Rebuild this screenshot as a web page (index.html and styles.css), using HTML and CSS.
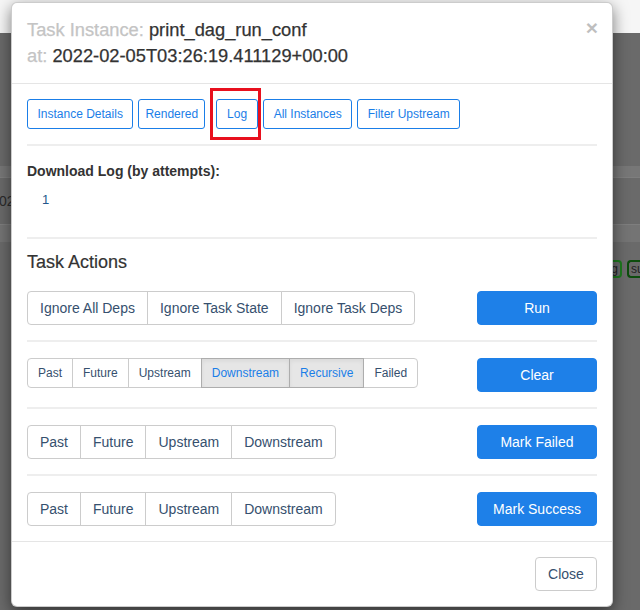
FILE: index.html
```html
<!DOCTYPE html>
<html lang="en">
<head>
<meta charset="utf-8">
<title>Task Instance</title>
<link rel="stylesheet" href="styles.css">
</head>
<body>
<div class="backdrop">
  <div class="bg-top"></div>
  <div class="bg-gap"></div>
  <div class="bg-band-a"></div>
  <div class="bg-row"><span class="bg-text">02</span></div>
  <div class="bg-band-b"></div>
  <div class="bg-badges"><span class="badge">running</span><span class="badge dark">su</span></div>
</div>

<div class="modal">
  <div class="modal-header">
    <button class="close" type="button">&times;</button>
    <div class="title"><span class="muted">Task Instance:</span> print_dag_run_conf</div>
    <div class="title"><span class="muted">at:</span> 2022-02-05T03:26:19.411129+00:00</div>
  </div>
  <div class="modal-body">
    <div class="tabs">
      <button class="btn-outline">Instance Details</button>
      <button class="btn-outline narrow">Rendered</button>
      <span class="highlight-wrap"><button class="btn-outline wide">Log</button><span class="highlight"></span></span>
      <button class="btn-outline">All Instances</button>
      <button class="btn-outline">Filter Upstream</button>
    </div>
    <hr class="divider">
    <div class="section-label">Download Log (by attempts):</div>
    <div class="attempts"><a class="attempt-link" href="#">1</a></div>
    <hr class="divider before-title">
    <h4 class="section-title">Task Actions</h4>
    <div class="action-row">
      <div class="btn-group">
        <button class="btn">Ignore All Deps</button>
        <button class="btn">Ignore Task State</button>
        <button class="btn">Ignore Task Deps</button>
      </div>
      <button class="btn-primary">Run</button>
    </div>
    <hr class="divider">
    <div class="action-row">
      <div class="btn-group small">
        <button class="btn">Past</button>
        <button class="btn">Future</button>
        <button class="btn">Upstream</button>
        <button class="btn active">Downstream</button>
        <button class="btn active">Recursive</button>
        <button class="btn">Failed</button>
      </div>
      <button class="btn-primary">Clear</button>
    </div>
    <hr class="divider">
    <div class="action-row">
      <div class="btn-group">
        <button class="btn">Past</button>
        <button class="btn">Future</button>
        <button class="btn">Upstream</button>
        <button class="btn">Downstream</button>
      </div>
      <button class="btn-primary">Mark Failed</button>
    </div>
    <hr class="divider">
    <div class="action-row">
      <div class="btn-group">
        <button class="btn">Past</button>
        <button class="btn">Future</button>
        <button class="btn">Upstream</button>
        <button class="btn">Downstream</button>
      </div>
      <button class="btn-primary">Mark Success</button>
    </div>
  </div>
  <div class="modal-footer">
    <button class="btn close-btn">Close</button>
  </div>
</div>
</body>
</html>
```

FILE: styles.css
```css
* { box-sizing: border-box; }

html, body {
  margin: 0;
  padding: 0;
}

body {
  width: 640px;
  height: 610px;
  overflow: hidden;
  font-family: "Liberation Sans", Arial, Helvetica, sans-serif;
  color: #333;
  background: #6a6a6a;
  position: relative;
}

/* ---------- background page under the backdrop ---------- */
.backdrop {
  display: flex;
  flex-direction: column;
  overflow: hidden;
}
.bg-top { height: 33px; background: #f6f6f6; }
.bg-gap { height: 133px; background: #6a6a6a; }
.bg-band-a { height: 11px; background: #777; }
.bg-row {
  height: 48px;
  background: #6a6a6a;
  border-top: 1px solid #7e7e7e;
  border-bottom: 1px solid #7e7e7e;
  display: flex;
  align-items: center;
}
.bg-text {
  font-size: 14px;
  color: #2a2a2a;
  margin-left: -1px;
}
.bg-band-b { height: 17px; background: #747474; }
.bg-badges {
  display: flex;
  justify-content: flex-end;
  gap: 5px;
  padding-top: 18px;
}
.badge {
  border: 2px solid #1e7a1e;
  border-radius: 4px;
  height: 18px;
  padding: 0 2px;
  font-size: 12px;
  line-height: 14px;
  color: #222;
  background: #6a6a6a;
}
.badge.dark {
  border-color: #0d4d0d;
  border-right: 0;
  border-radius: 4px 0 0 4px;
  padding-right: 0;
  width: 13px;
  overflow: hidden;
  white-space: nowrap;
}

/* ---------- modal ---------- */
.modal {
  position: absolute;
  left: 11px;
  top: 2px;
  width: 602px;
  background: #fff;
  border: 1px solid rgba(0,0,0,.2);
  border-radius: 6px;
  box-shadow: 0 5px 15px rgba(0,0,0,.5);
}

.modal-header {
  padding: 14px 15px 14px 15px;
  border-bottom: 1px solid #e5e5e5;
}
.title {
  font-size: 18.3px;
  line-height: 26px;
  color: #333;
  -webkit-text-stroke: 0.25px #333;
}
.muted {
  color: #c4c4c4;
  -webkit-text-stroke: 0.25px #c4c4c4;
}

.close {
  float: right;
  margin-top: -2px;
  margin-right: -1px;
  padding: 0;
  background: transparent;
  border: 0;
  font-family: "Liberation Sans", Arial, sans-serif;
  font-size: 21px;
  font-weight: bold;
  line-height: 26px;
  color: #000;
  opacity: .25;
}

.modal-body {
  display: flex;
  flex-direction: column;
  padding: 15px;
}

.tabs {
  display: flex;
  gap: 5px;
}
.btn-outline {
  font-family: inherit;
  font-size: 12px;
  line-height: 18px;
  height: 30px;
  padding: 5px 9.5px;
  background: #fff;
  color: #1a7ee8;
  border: 1px solid #1a7ee8;
  border-radius: 3px;
}
.btn-outline.narrow { padding: 5px 6px; }
.btn-outline.wide { padding: 5px 10px; }
.highlight-wrap {
  position: relative;
  display: flex;
  margin-left: 6px;
}
.highlight {
  position: absolute;
  left: -6px;
  top: -11px;
  width: 51px;
  height: 52px;
  border: 3px solid #e8101e;
}

.divider {
  width: 100%;
  margin: 15px 0 16px;
  border: 0;
  height: 2px;
  background: #eee;
}
.divider.before-title {
  margin: 0 0 12px;
}

.section-label {
  font-size: 14px;
  font-weight: bold;
  line-height: 18px;
  color: #333;
}
.attempts {
  padding-left: 15px;
  margin-top: 11px;
  margin-bottom: 28px;
  font-size: 13px;
  line-height: 18px;
}
.attempt-link {
  color: #23578c;
  text-decoration: none;
}

.section-title {
  font-size: 18px;
  font-weight: normal;
  line-height: 22px;
  margin: 0 0 18px;
  color: #333;
  -webkit-text-stroke: 0.2px #333;
}

.action-row {
  display: flex;
  justify-content: space-between;
  align-items: flex-start;
}

.btn-group {
  display: flex;
}
.btn {
  font-family: inherit;
  font-size: 14px;
  line-height: 20px;
  height: 34px;
  padding: 6px 12px;
  background: #fff;
  color: #36506e;
  border: 1px solid #ccc;
  margin-left: -1px;
}
.btn-group .btn:first-child {
  margin-left: 0;
  border-radius: 4px 0 0 4px;
}
.btn-group .btn:last-child {
  border-radius: 0 4px 4px 0;
}
.btn-group.small .btn {
  font-size: 12px;
  line-height: 18px;
  height: 30px;
  padding: 5px 10px;
}
.btn.active {
  background: #e6e6e6;
  border-color: #adadad;
  color: #1a7ee8;
  box-shadow: inset 0 2px 4px rgba(0,0,0,.06);
  position: relative;
}

.btn-primary {
  font-family: inherit;
  font-size: 14px;
  line-height: 20px;
  height: 34px;
  width: 120px;
  padding: 6px 12px;
  background: #1e80e8;
  color: #fff;
  border: 1px solid #1e80e8;
  border-radius: 4px;
}

.modal-footer {
  padding: 15px;
  border-top: 1px solid #e5e5e5;
  display: flex;
  justify-content: flex-end;
}
.close-btn {
  margin-left: 0;
  border-radius: 4px;
  width: 62px;
}
```
